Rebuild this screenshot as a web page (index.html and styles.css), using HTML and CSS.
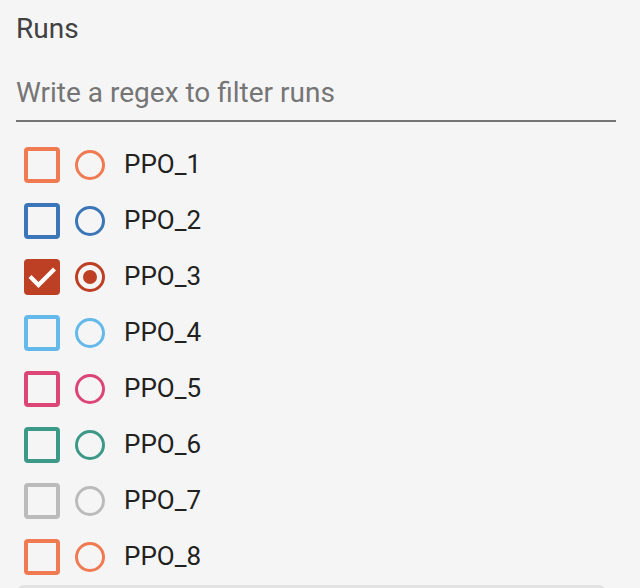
FILE: index.html
```html
<!DOCTYPE html>
<html>
<head>
<meta charset="utf-8">
<link rel="stylesheet" href="styles.css">
</head>
<body>
<div class="panel">
  <div class="title">Runs</div>
  <div class="filter">
    <input class="filter-input" type="text" placeholder="Write a regex to filter runs">
  </div>
  <ul class="runs">
    <li class="run" style="--c:#f07a52"><span class="box"></span><span class="radio"></span><span class="name">PPO_1</span></li>
    <li class="run" style="--c:#3a76b8"><span class="box"></span><span class="radio"></span><span class="name">PPO_2</span></li>
    <li class="run selected" style="--c:#bd4025"><span class="box"><svg viewBox="0 0 36 36" width="36" height="36"><polyline points="7.5,19 14.5,26 29,11.5" fill="none" stroke="#fff" stroke-width="4.2" stroke-linecap="square"/></svg></span><span class="radio"><span class="dot"></span></span><span class="name">PPO_3</span></li>
    <li class="run" style="--c:#63b9ea"><span class="box"></span><span class="radio"></span><span class="name">PPO_4</span></li>
    <li class="run" style="--c:#dc4677"><span class="box"></span><span class="radio"></span><span class="name">PPO_5</span></li>
    <li class="run" style="--c:#3d9987"><span class="box"></span><span class="radio"></span><span class="name">PPO_6</span></li>
    <li class="run" style="--c:#bbbbbb"><span class="box"></span><span class="radio"></span><span class="name">PPO_7</span></li>
    <li class="run" style="--c:#f07a52"><span class="box"></span><span class="radio"></span><span class="name">PPO_8</span></li>
  </ul>
  <div class="footer"></div>
</div>
</body>
</html>
```
FILE: styles.css
```css
html, body {
  margin: 0;
  padding: 0;
  background: #f5f5f5;
  font-family: Roboto, "Noto Sans", sans-serif;
}
.panel {
  padding: 13px 24px 0 16px;
}
.title {
  font-size: 28px;
  line-height: 32px;
  color: #424242;
}
.filter {
  margin-top: 31px;
  border-bottom: 2px solid #757575;
}
.filter-input {
  display: block;
  width: 100%;
  box-sizing: border-box;
  border: none;
  background: transparent;
  outline: none;
  padding: 0;
  margin: 0 0 10px 0;
  font-family: Roboto, "Noto Sans", sans-serif;
  font-size: 28px;
  line-height: 34px;
  height: 34px;
  color: #212121;
}
.filter-input::placeholder {
  color: #757575;
  opacity: 1;
}
.runs {
  list-style: none;
  margin: 15px 0 0 0;
  padding: 0 0 0 8px;
}
.run {
  height: 56px;
  display: flex;
  align-items: center;
}
.box {
  width: 36px;
  height: 36px;
  box-sizing: border-box;
  border: 4px solid var(--c);
  border-radius: 4px;
  flex: none;
}
.selected .box {
  background: var(--c);
  border: none;
}
.box svg {
  display: block;
}
.radio {
  width: 30px;
  height: 30px;
  box-sizing: border-box;
  border: 3px solid var(--c);
  border-radius: 50%;
  margin-left: 15px;
  flex: none;
  display: flex;
  align-items: center;
  justify-content: center;
}
.dot {
  width: 14px;
  height: 14px;
  border-radius: 50%;
  background: var(--c);
}
.name {
  margin-left: 19px;
  font-size: 26px;
  color: #212121;
  line-height: 32px;
  margin-bottom: 2px;
}
.footer {
  margin: 0 10px 0 1px;
  height: 20px;
  background: #e2e2e2;
  border-radius: 7px 7px 0 0;
}
```
